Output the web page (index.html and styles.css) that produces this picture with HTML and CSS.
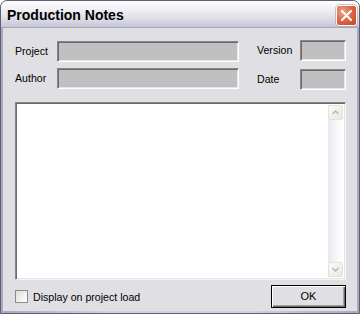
FILE: index.html
```html
<!DOCTYPE html>
<html>
<head>
<meta charset="utf-8">
<link rel="stylesheet" href="styles.css">
</head>
<body>
<div class="window">
  <div class="titlebar">
    <span class="title">Production Notes</span>
    <button class="close" aria-label="Close">
      <svg width="11" height="11" viewBox="0 0 11 11"><path d="M1 1 L10 10 M10 1 L1 10" stroke="#fff" stroke-width="2" stroke-linecap="square"/></svg>
    </button>
  </div>
  <div class="client">
    <div class="fields">
      <div class="grid-left">
        <label class="lbl">Project</label><div class="edit"></div>
        <label class="lbl">Author</label><div class="edit"></div>
      </div>
      <div class="grid-right">
        <label class="lbl">Version</label><div class="edit"></div>
        <label class="lbl">Date</label><div class="edit"></div>
      </div>
    </div>
    <div class="memo">
      <div class="memo-text"></div>
      <div class="scroll">
        <div class="arrow">
          <svg width="7" height="5" viewBox="0 0 7 5"><path d="M0.5 4 L3.5 1 L6.5 4" fill="none" stroke="#b4b6c4" stroke-width="1.5"/></svg>
        </div>
        <div class="track"></div>
        <div class="arrow">
          <svg width="7" height="5" viewBox="0 0 7 5"><path d="M0.5 1 L3.5 4 L6.5 1" fill="none" stroke="#b4b6c4" stroke-width="1.5"/></svg>
        </div>
      </div>
    </div>
    <div class="bottom">
      <label class="check"><span class="box"></span><span>Display on project load</span></label>
      <button class="ok">OK</button>
    </div>
  </div>
</div>
</body>
</html>
```
FILE: styles.css
```css
* { box-sizing: border-box; }
html, body { margin: 0; padding: 0; background: #ffffff; }
body { width: 360px; height: 314px; overflow: hidden; font-family: "Liberation Sans", Arial, sans-serif; font-size: 10.6px; color: #000; }

.window {
  width: 360px; height: 314px;
  display: flex; flex-direction: column;
  border: 1px solid #5f5e76;
  border-radius: 7px 7px 0 0;
  background: linear-gradient(to right, #a9a8bd, #d2d1df 30%, #d2d1df 70%, #a9a8bd);
  padding: 0 2px 2px 2px;
}

.titlebar {
  height: 26px;
  flex: none;
  display: flex; align-items: center; justify-content: space-between;
  padding: 1px 2px 0 6px;
  margin: 0 -2px;
  border-radius: 6px 6px 0 0;
  background: linear-gradient(#fdfdfe 0%, #f2f2f6 30%, #dcdce6 70%, #c6c5d4 100%);
}
.title {
  font-family: "Liberation Sans", Arial, sans-serif;
  font-weight: bold; font-size: 14px; color: #000;
}
.close {
  width: 21px; height: 21px; padding: 0; margin-top: 1px;
  display: flex; align-items: center; justify-content: center;
  border: 1px solid #ffffff;
  border-radius: 3px;
  background: radial-gradient(circle at 30% 30%, #f0a388 0%, #de6a49 45%, #c4431f 100%);
  box-shadow: 0 0 0 0.5px #b08e8e;
}

.client {
  flex: 1;
  background: #e0dfe3;
  border-top: 1px solid #a7a6b8;
  display: flex; flex-direction: column;
  padding: 12px 11px 2px 12px;
}

.fields { display: flex; gap: 18px; }
.grid-left { display: grid; grid-template-columns: 42px 182px; row-gap: 4px; align-items: center; }
.grid-right { display: grid; grid-template-columns: 43px 46px; row-gap: 8px; align-items: center; }
.lbl { line-height: 13px; }

.edit {
  height: 21px;
  background: #c0c0c0;
  border: 1px solid;
  border-color: #878787 #ffffff #ffffff #878787;
  box-shadow: inset 1px 1px 0 #6a6a6a, inset -1px -1px 0 #e6e5e9;
}

.memo {
  margin-top: 12px;
  height: 178px;
  display: flex;
  background: #ffffff;
  border: 1px solid;
  border-color: #878787 #f4f4f6 #f4f4f6 #878787;
  box-shadow: inset 1px 1px 0 #6a6a6a, inset -1px -1px 0 #e6e5e9;
  padding: 2px;
}
.memo-text { flex: 1; }
.scroll {
  width: 15px;
  display: flex; flex-direction: column;
  background: linear-gradient(to right, #e9e9ef, #f8f8fa 60%, #ffffff);
}
.track { flex: 1; }
.arrow {
  height: 15px;
  display: flex; align-items: center; justify-content: center;
  background: linear-gradient(to bottom right, #fbfbf8, #e9e8df);
  border: 1px solid #e4e3da;
  border-radius: 2px;
}

.bottom {
  margin-top: 5px;
  display: flex; align-items: center; justify-content: space-between;
}
.check { display: flex; align-items: center; gap: 5px; }
.box {
  width: 13px; height: 13px;
  border: 1px solid #8c8c94;
  background: linear-gradient(to bottom right, #dcdcd8, #f6f6f4 70%, #ffffff);
}
.ok {
  width: 75px; height: 23px;
  font-family: "Liberation Sans", Arial, sans-serif; font-size: 11px; color: #000;
  background: #e0dfe3;
  border: 1px solid #000;
  box-shadow: inset 1px 1px 0 #ffffff, inset -1px -1px 0 #6a6a6a, inset -2px -2px 0 #a0a0a0;
  padding: 0 0 1px 0;
}
```
